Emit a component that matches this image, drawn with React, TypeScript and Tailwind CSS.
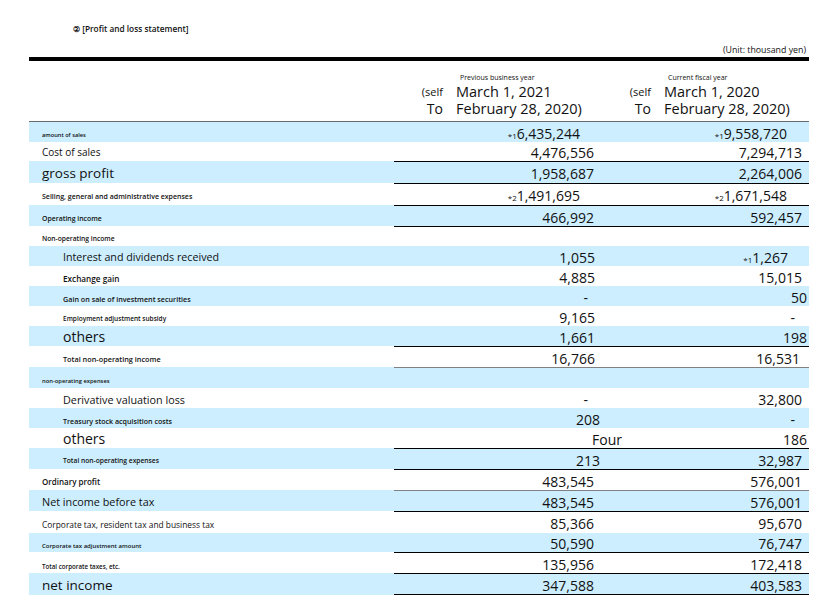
import React from 'react';

interface Cell {
  v: string;
  star?: string;
  c: string;
}

interface Row {
  label: string;
  lc: string;
  h: string;
  line?: 'black' | 'gray';
  prev?: Cell;
  cur?: Cell;
}

// small labels in the source are rendered heavier, hence font-semibold on them
const rows: Row[] = [
  { label: 'amount of sales', lc: 'pl-[13px] pt-[6px] text-[5.7px] font-semibold', h: 'h-[20px]', prev: { v: '6,435,244', star: '*1', c: 'pr-[22px]' }, cur: { v: '9,558,720', star: '*1', c: 'pr-[22px]' } },
  { label: 'Cost of sales', lc: 'pl-[13px] pt-[2px] text-[10px]', h: 'h-[19px]', prev: { v: '4,476,556', c: 'pr-[8px]' }, cur: { v: '7,294,713', c: 'pr-[7px]' } },
  { label: 'gross profit', lc: 'pl-[13px] pt-[2px] text-[13.5px]', h: 'h-[22px]', line: 'black', prev: { v: '1,958,687', c: 'pr-[8px]' }, cur: { v: '2,264,006', c: 'pr-[7px]' } },
  { label: 'Selling, general and administrative expenses', lc: 'pl-[13px] pt-[7px] text-[7px] font-semibold', h: 'h-[22px]', line: 'black', prev: { v: '1,491,695', star: '*2', c: 'pr-[22px]' }, cur: { v: '1,671,548', star: '*2', c: 'pr-[22px]' } },
  { label: 'Operating income', lc: 'pl-[13px] pt-[7px] text-[6.9px] font-semibold', h: 'h-[21px]', line: 'black', prev: { v: '466,992', c: 'pr-[8px]' }, cur: { v: '592,457', c: 'pr-[7px]' } },
  { label: 'Non-operating income', lc: 'pl-[13px] pt-[6px] text-[6.7px] font-semibold', h: 'h-[20px]', line: 'black' },
  { label: 'Interest and dividends received', lc: 'pl-[34px] pt-[2px] text-[10.7px]', h: 'h-[20px]', prev: { v: '1,055', c: 'pr-[7px]' }, cur: { v: '1,267', star: '*1', c: 'pr-[21px]' } },
  { label: 'Exchange gain', lc: 'pl-[34px] pt-[6px] text-[8.2px] font-semibold', h: 'h-[20px]', prev: { v: '4,885', c: 'pr-[7px]' }, cur: { v: '15,015', c: 'pr-[7px]' } },
  { label: 'Gain on sale of investment securities', lc: 'pl-[34px] pt-[7px] text-[7.2px] font-semibold', h: 'h-[20px]', prev: { v: '-', c: 'pr-[14px]' }, cur: { v: '50', c: 'pr-[2px]' } },
  { label: 'Employment adjustment subsidy', lc: 'pl-[34px] pt-[6px] text-[6.5px] font-semibold', h: 'h-[20px]', prev: { v: '9,165', c: 'pr-[7px]' }, cur: { v: '-', c: 'pr-[14px]' } },
  { label: 'others', lc: 'pl-[34px] text-[14px]', h: 'h-[20px]', prev: { v: '1,661', c: 'pr-[7px]' }, cur: { v: '198', c: 'pr-[2px]' } },
  { label: 'Total non-operating income', lc: 'pl-[34px] pt-[5px] text-[7.3px] font-semibold', h: 'h-[21px]', line: 'black', prev: { v: '16,766', c: 'pr-[7px]' }, cur: { v: '16,531', c: 'pr-[9px]' } },
  { label: 'non-operating expenses', lc: 'pl-[13px] pt-[7px] text-[5.8px] font-semibold', h: 'h-[21px]', line: 'gray' },
  { label: 'Derivative valuation loss', lc: 'pl-[34px] pt-[4px] text-[10.8px]', h: 'h-[20px]', prev: { v: '-', c: 'pr-[14px]' }, cur: { v: '32,800', c: 'pr-[7px]' } },
  { label: 'Treasury stock acquisition costs', lc: 'pl-[34px] pt-[7px] text-[7.1px] font-semibold', h: 'h-[20px]', prev: { v: '208', c: 'pr-[2px]' }, cur: { v: '-', c: 'pr-[14px]' } },
  { label: 'others', lc: 'pl-[34px] text-[14px]', h: 'h-[20px]', prev: { v: 'Four', c: 'pr-0 -mr-[20px]' }, cur: { v: '186', c: 'pr-[2px]' } },
  { label: 'Total non-operating expenses', lc: 'pl-[34px] pt-[5px] text-[6.7px] font-semibold', h: 'h-[21px]', line: 'black', prev: { v: '213', c: 'pr-[2px]' }, cur: { v: '32,987', c: 'pr-[7px]' } },
  { label: 'Ordinary profit', lc: 'pl-[13px] pt-[5px] text-[8px] font-semibold', h: 'h-[21px]', line: 'black', prev: { v: '483,545', c: 'pr-[8px]' }, cur: { v: '576,001', c: 'pr-[7px]' } },
  { label: 'Net income before tax', lc: 'pl-[13px] pt-[3px] text-[10.8px]', h: 'h-[21px]', line: 'gray', prev: { v: '483,545', c: 'pr-[8px]' }, cur: { v: '576,001', c: 'pr-[7px]' } },
  { label: 'Corporate tax, resident tax and business tax', lc: 'pl-[13px] pt-[6px] text-[8.4px]', h: 'h-[22px]', line: 'black', prev: { v: '85,366', c: 'pr-[8px]' }, cur: { v: '95,670', c: 'pr-[7px]' } },
  { label: 'Corporate tax adjustment amount', lc: 'pl-[13px] pt-[7px] text-[6px] font-semibold', h: 'h-[19px]', prev: { v: '50,590', c: 'pr-[8px]' }, cur: { v: '76,747', c: 'pr-[7px]' } },
  { label: 'Total corporate taxes, etc.', lc: 'pl-[13px] pt-[8px] text-[6.2px] font-semibold', h: 'h-[21px]', line: 'black', prev: { v: '135,956', c: 'pr-[8px]' }, cur: { v: '172,418', c: 'pr-[7px]' } },
  { label: 'net income', lc: 'pl-[13px] pt-[2px] text-[13.5px]', h: 'h-[22px]', line: 'black', prev: { v: '347,588', c: 'pr-[8px]' }, cur: { v: '403,583', c: 'pr-[7px]' } },
];

function ValueCell({ cell, line, last, w }: { cell?: Cell; line?: 'black' | 'gray'; last: boolean; w: string }) {
  const border =
    line === 'black' ? 'border-t border-black' : line === 'gray' ? 'border-t border-[#808080]' : '';
  return (
    <div
      className={`${w} shrink-0 flex items-center justify-end pt-[2px] text-[14px] ${border} ${
        last ? 'border-b border-black' : ''
      }`}
    >
      {cell && (
        <span className={`whitespace-nowrap ${cell.c}`}>
          {cell.star && <span className="text-[8px]">{cell.star}</span>}
          {cell.v}
        </span>
      )}
    </div>
  );
}

function PeriodHeader({ title, from, to }: { title: string; from: string; to: string }) {
  return (
    <div className="flex flex-col pt-[13px]">
      <div className="pl-[66px] text-[7px] leading-[8px] font-medium">{title}</div>
      <div className="flex mt-[2px]">
        <div className="w-[49px] text-right">
          <div className="text-[11px] leading-[16px]">(self</div>
          <div className="text-[14px] leading-[17px]">To</div>
        </div>
        <div className="pl-[13px] text-[14.5px] whitespace-nowrap">
          <div className="leading-[16px]">{from}</div>
          <div className="leading-[17px]">{to}</div>
        </div>
      </div>
    </div>
  );
}

export default function App() {
  return (
    <div className="w-[836px] h-[616px] bg-white text-[#111] font-['Open_Sans',sans-serif] pt-[24px] pl-[29px] overflow-hidden">
      <div className="ml-[44px] text-[8.3px] leading-[10px] font-semibold">② [Profit and loss statement]</div>
      <div className="w-[780px] mt-[11px] pr-[3px] text-right text-[8.8px] leading-[10px] font-medium">
        (Unit: thousand yen)
      </div>

      <div className="w-[780px] mt-[2px] border-t-4 border-black">
        {/* header */}
        <div className="flex h-[61px] border-b border-[#6b6b6b]">
          <div className="w-[365px] shrink-0" />
          <div className="w-[208px] shrink-0">
            <PeriodHeader title="Previous business year" from="March 1, 2021" to="February 28, 2020)" />
          </div>
          <div className="w-[207px] shrink-0">
            <PeriodHeader title="Current fiscal year" from="March 1, 2020" to="February 28, 2020)" />
          </div>
        </div>

        {rows.map((r, i) => (
          <div key={i} className={`flex ${r.h} ${i % 2 === 0 ? 'bg-[#cceeff]' : 'bg-white'}`}>
            <div className={`w-[365px] shrink-0 flex items-center whitespace-nowrap ${r.lc}`}>{r.label}</div>
            <ValueCell cell={r.prev} line={r.line} last={i === rows.length - 1} w="w-[208px]" />
            <ValueCell cell={r.cur} line={r.line} last={i === rows.length - 1} w="w-[207px]" />
          </div>
        ))}
      </div>
    </div>
  );
}
